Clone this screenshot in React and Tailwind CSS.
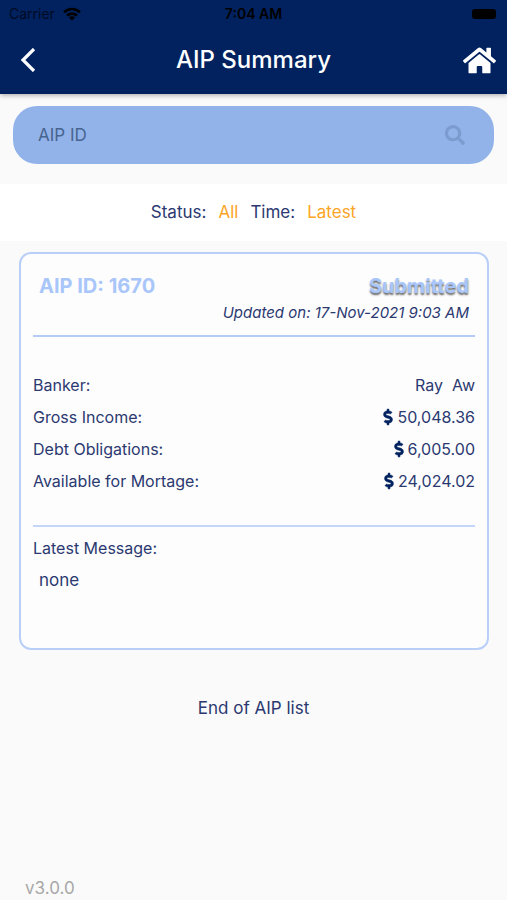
import { FaDollarSign, FaHome, FaSearch } from "react-icons/fa";

const amounts = [
  { label: "Gross Income:", value: "50,048.36" },
  { label: "Debt Obligations:", value: "6,005.00" },
  { label: "Available for Mortage:", value: "24,024.02" },
];

function StatusBar() {
  return (
    <div className="grid h-7 grid-cols-3 items-center px-2 text-sm text-black">
      <div className="flex items-center gap-2 pl-px">
        <span className="text-[#000a24]">Carrier</span>
        <svg viewBox="0 0 18 14" className="h-[14px] w-[18px]" fill="none" stroke="currentColor" strokeWidth="2.6" aria-hidden="true">
          <path d="M1 5.2a11.5 11.5 0 0 1 16 0" />
          <path d="M4 8.6a7.2 7.2 0 0 1 10 0" />
          <path d="M9 13.6 5.9 10.6a4.6 4.6 0 0 1 6.2 0Z" fill="currentColor" stroke="none" />
        </svg>
      </div>
      <span className="text-center font-semibold">7:04 AM</span>
      <span className="mr-[3px] h-[10px] w-[24px] justify-self-end rounded-[3px] bg-black" />
    </div>
  );
}

function Header() {
  return (
    <header className="relative bg-[#01225f] pb-[6px] text-white shadow-[0_1px_5px_rgba(0,0,0,0.35)]">
      <StatusBar />
      <div className="grid h-[60px] grid-cols-[40px_1fr_40px] items-center px-2 pt-1">
        <button type="button" aria-label="Back" className="flex h-10 items-center justify-center">
          <svg viewBox="0 0 16 24" className="h-6 w-4" fill="none" stroke="currentColor" strokeWidth="3.2" aria-hidden="true">
            <path d="M14 1 3 12l11 11" />
          </svg>
        </button>
        <h1 className="text-center text-2xl font-medium">AIP Summary</h1>
        <button type="button" aria-label="Home" className="flex h-10 items-center justify-center">
          <FaHome className="size-[33px] shrink-0" />
        </button>
      </div>
    </header>
  );
}

function SummaryCard() {
  return (
    <article className="mr-[18px] ml-[19px] mt-[11px] rounded-xl border-2 border-[#b9cff7] bg-[#fdfdfe] px-3 pb-14 text-base">
      <div className="flex justify-between px-[6px] pt-5 text-xl leading-6 font-bold text-[#a9c6fa]">
        <h2>AIP ID: 1670</h2>
        <span className="[text-shadow:0_2px_2px_rgba(0,0,0,0.6)]">Submitted</span>
      </div>
      <p className="px-[6px] pt-[3px] text-right text-[15px] leading-6 italic">Updated on: 17-Nov-2021 9:03 AM</p>
      <hr className="mt-[10px] border-t-2 border-[#b4ccf3]" />
      <dl className="mt-8 leading-8">
        <div className="flex justify-between">
          <dt>Banker:</dt>
          <dd className="whitespace-pre">Ray  Aw</dd>
        </div>
        {amounts.map(({ label, value }) => (
          <div key={label} className="flex justify-between">
            <dt>{label}</dt>
            <dd className="flex items-center gap-px">
              <FaDollarSign className="size-4 overflow-visible stroke-[#01225f] stroke-[16px] text-[#01225f]" aria-hidden="true" />
              {value}
            </dd>
          </div>
        ))}
      </dl>
      <hr className="mt-7 border-t-2 border-[#c3d5f8]" />
      <h3 className="pt-[9px] leading-6">Latest Message:</h3>
      <p className="px-[6px] pt-2 text-[17px] leading-6">none</p>
    </article>
  );
}

export default function App() {
  return (
    <div className="flex min-h-screen flex-col bg-[#fafafa] font-[Inter,sans-serif] text-[17px] leading-6 text-[#2b3970]">
      <Header />
      <main className="flex flex-1 flex-col">
        <form role="search" className="mx-[13px] mt-3 flex h-[58px] items-center rounded-3xl bg-[#92b3e9] pr-[29px] pl-[25px]">
          <input
            type="text"
            aria-label="AIP ID"
            placeholder="AIP ID"
            className="min-w-0 flex-1 bg-transparent outline-none placeholder:text-[#47648f]"
          />
          <button type="submit" aria-label="Search" className="text-[#7c9ccf]">
            <FaSearch className="size-5" />
          </button>
        </form>
        <div className="mt-5 flex h-[57px] items-center justify-center gap-3 bg-white pb-[2px]">
          <span>Status:</span>
          <button type="button" className="text-[#fca526]">All</button>
          <span>Time:</span>
          <button type="button" className="text-[#fca526]">Latest</button>
        </div>
        <SummaryCard />
        <p className="pt-[46px] text-center">End of AIP list</p>
      </main>
      <footer className="px-[25px] text-[#a7a7a7]">v3.0.0</footer>
    </div>
  );
}
